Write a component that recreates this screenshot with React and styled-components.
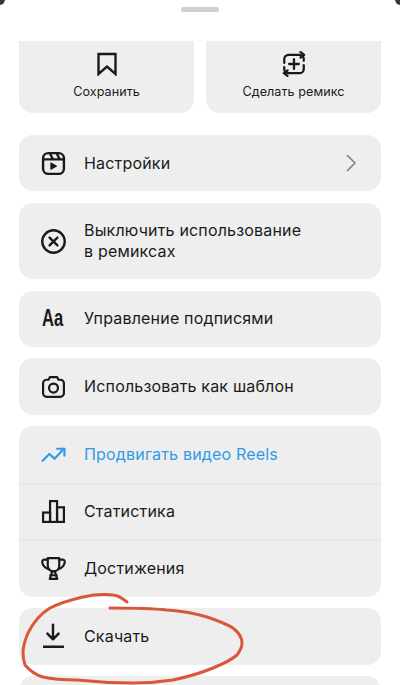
import styled, { createGlobalStyle } from "styled-components";

const GlobalStyle = createGlobalStyle`
  html, body {
    margin: 0;
    padding: 0;
    background: #fff;
  }
  * {
    box-sizing: border-box;
  }
`;

const Stroke = ({ children, size = 25, width = 2.1 }) => (
  <svg width={size} height={size} viewBox="0 0 24 24" fill="none" stroke="currentColor" strokeWidth={width} strokeLinecap="round" strokeLinejoin="round">
    {children}
  </svg>
);

const BookmarkIcon = () => (
  <Stroke size={24} width={2.4}>
    <path d="M3.5 2h17v20L12 14.5 3.5 22z" strokeLinecap="butt" strokeLinejoin="miter" />
  </Stroke>
);

const RemixIcon = () => (
  <Stroke size={26} width={2.1}>
    <path d="M21 9V7.5A4 4 0 0 0 17 3.5H7A4 4 0 0 0 3 7.5V11" />
    <path d="M18 1l3.4 2.6L18 6" />
    <path d="M3 15v1.5a4 4 0 0 0 4 4h10a4 4 0 0 0 4-4V13" />
    <path d="M6 23l-3.4-2.6L6 18" />
    <path d="M12 7.5v9M7.5 12h9" />
  </Stroke>
);

const ReelsIcon = () => (
  <Stroke width={2.3}>
    <rect x="2" y="2" width="20" height="20" rx="5" />
    <path d="M2 8h20M8.5 2.2 11.5 8M15 2.2 18 8" />
    <path d="M9.5 11.5v6l5.5-3z" fill="currentColor" strokeWidth="1" />
  </Stroke>
);

const CircleXIcon = () => (
  <Stroke size={27}>
    <circle cx="12" cy="12" r="10" />
    <path d="M8.5 8.5l7 7M15.5 8.5l-7 7" />
  </Stroke>
);

const CameraIcon = () => (
  <Stroke>
    <path d="M2 9a3.5 3.5 0 0 1 3.5-3.5h1.7L8.6 3h6.8l1.4 2.5h1.7A3.5 3.5 0 0 1 22 9v9.5a3.5 3.5 0 0 1-3.5 3.5h-13A3.5 3.5 0 0 1 2 18.5z" />
    <circle cx="12" cy="13.5" r="4.3" />
  </Stroke>
);

const TrendIcon = () => (
  <Stroke>
    <path d="M1.5 18 8 11.5l5 4.5 9-9.5" />
    <path d="M15.5 6.5h7v6.5" />
  </Stroke>
);

const BarsIcon = () => (
  <Stroke width={2.1}>
    <g strokeLinejoin="miter">
      <rect x="2" y="13" width="6.7" height="9" />
      <rect x="8.7" y="2" width="6.7" height="20" />
      <rect x="15.4" y="8" width="6.6" height="14" />
    </g>
  </Stroke>
);

const TrophyIcon = () => (
  <Stroke>
    <path d="M6.5 2h11v7c0 3.5-2.5 5.7-5.5 5.7S6.5 12.5 6.5 9z" />
    <path d="M6.5 3.5H3C1.4 3.5 1 5 1.3 6.5c.6 3 2.4 5 6 6.2M17.5 3.5H21c1.6 0 2 1.5 1.7 3-.6 3-2.4 5-6 6.2" />
    <path d="M10.8 14.7 8.4 22h7.2l-2.4-7.3" />
    <path d="M9 18.5h6" />
  </Stroke>
);

const DownloadIcon = () => (
  <Stroke size={28}>
    <path d="M12 2.3v12.4M7.2 10 12 14.8l4.8-4.8" />
    <path d="M3.4 21.2h18" strokeLinecap="butt" />
  </Stroke>
);

const ChevronIcon = () => (
  <svg width="12" height="18" viewBox="0 0 12 18" fill="none" stroke="#808083" strokeWidth="1.6" strokeLinecap="round" strokeLinejoin="round">
    <path d="M2.5 1.5l7.5 7.5-7.5 7.5" />
  </svg>
);

const Mark = () => (
  <MarkSvg viewBox="0 0 400 685" fill="none" stroke="#d9573a" strokeWidth="3" strokeLinecap="round" strokeLinejoin="round">
    <path d="M127 602C122 598 118 595 113 595 102 594 92 595 83 597 70 600 60 603 50 608 40 614 33 623 28 633 25 640 23 647 23 653 23 658 24 662 25 665 30 671 36 675 43 677 55 680 66 680 77 680 96 682 114 683 133 683 147 683 160 682 173 680 187 677 201 673 213 668 223 664 231 660 237 655 240 651 242 647 242 643 242 637 238 632 233 628 225 623 216 620 207 617 194 613 181 611 167 610 148 608 129 608 110 608" />
  </MarkSvg>
);

const MarkSvg = styled.svg`
  position: absolute;
  left: 0;
  top: 0;
  width: 400px;
  height: 685px;
  pointer-events: none;
`;

const Sheet = styled.div`
  position: relative;
  width: 400px;
  height: 685px;
  overflow: hidden;
  background: #fff;
  font-family: Inter, "Liberation Sans", sans-serif;
  color: #1a1a1a;
`;

const Corner = styled.i`
  position: absolute;
  top: -6px;
  ${(p) => (p.$right ? "right: -6px;" : "left: -6px;")}
  width: 11px;
  height: 11px;
  border-radius: 50%;
  background: #3a3a3a;
`;

const Handle = styled.div`
  display: flex;
  justify-content: center;
  padding-top: 7px;
  height: 41px;
  &::before {
    content: "";
    width: 38px;
    height: 5px;
    border-radius: 3px;
    background: #cfcfcf;
  }
`;

const Stack = styled.div`
  display: flex;
  flex-direction: column;
  gap: 11.33px;
  padding: 0 19px;
`;

const TopRow = styled.div`
  display: grid;
  grid-template-columns: 1fr 1fr;
  gap: 12px;
  margin-bottom: 10.67px;
`;

const TopCard = styled.div`
  display: flex;
  flex-direction: column;
  align-items: center;
  height: 72px;
  padding-top: 11px;
  border-radius: 0 0 14px 14px;
  background: #eeeeee;
  font-size: 12.6px;
  letter-spacing: 0.05px;
`;

const TopIcon = styled.div`
  display: flex;
  align-items: center;
  justify-content: center;
  height: 24px;
  margin-bottom: 8px;
`;

const Card = styled.div`
  border-radius: 14px;
  background: #eeeeee;
  overflow: hidden;
`;

const Row = styled.div`
  display: flex;
  align-items: center;
  gap: 17px;
  height: ${(p) => p.$height || 56.8}px;
  padding: 0 24px 0 20px;
  color: ${(p) => (p.$accent ? "#2f9be6" : "inherit")};
  & + & {
    border-top: 1px solid #e4e4e4;
  }
`;

const IconSlot = styled.div`
  display: flex;
  align-items: center;
  justify-content: center;
  flex: none;
  width: 28px;
  height: 28px;
`;

const AaGlyph = styled.span`
  font-family: "Liberation Sans", sans-serif;
  font-size: 23px;
  font-weight: 700;
  transform: scaleX(0.72);
  white-space: nowrap;
`;

const Label = styled.div`
  flex: 1;
  font-size: 16px;
  letter-spacing: 0.18px;
  line-height: 21px;
  white-space: pre-line;
`;

const App = () => (
  <Sheet>
    <GlobalStyle />
    <Corner />
    <Corner $right />
    <Handle />
    <Stack>
      <TopRow>
        <TopCard>
          <TopIcon><BookmarkIcon /></TopIcon>
          Сохранить
        </TopCard>
        <TopCard>
          <TopIcon><RemixIcon /></TopIcon>
          Сделать ремикс
        </TopCard>
      </TopRow>
      <Card>
        <Row $height={56.5}>
          <IconSlot><ReelsIcon /></IconSlot>
          <Label>Настройки</Label>
          <ChevronIcon />
        </Row>
      </Card>
      <Card>
        <Row $height={76.5}>
          <IconSlot><CircleXIcon /></IconSlot>
          <Label>{"Выключить использование\nв ремиксах"}</Label>
        </Row>
      </Card>
      <Card>
        <Row $height={56.5}>
          <IconSlot><AaGlyph>Aa</AaGlyph></IconSlot>
          <Label>Управление подписями</Label>
        </Row>
      </Card>
      <Card>
        <Row $height={56.5}>
          <IconSlot><CameraIcon /></IconSlot>
          <Label>Использовать как шаблон</Label>
        </Row>
      </Card>
      <Card>
        <Row $accent>
          <IconSlot><TrendIcon /></IconSlot>
          <Label>Продвигать видео Reels</Label>
        </Row>
        <Row>
          <IconSlot><BarsIcon /></IconSlot>
          <Label>Статистика</Label>
        </Row>
        <Row>
          <IconSlot><TrophyIcon /></IconSlot>
          <Label>Достижения</Label>
        </Row>
      </Card>
      <Card>
        <Row>
          <IconSlot><DownloadIcon /></IconSlot>
          <Label>Скачать</Label>
        </Row>
      </Card>
      <Card>
        <Row />
      </Card>
    </Stack>
    <Mark />
  </Sheet>
);

export default App;
